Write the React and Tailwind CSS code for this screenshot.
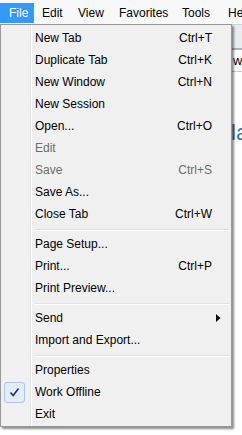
const font = { fontFamily: '"Liberation Sans", Arial, sans-serif' };

const topMenus = [
  { label: 'File', w: 'w-[34px] pl-[9px]', active: true },
  { label: 'Edit', w: 'w-[36px] pl-[8px]' },
  { label: 'View', w: 'w-[41px] pl-[8px]' },
  { label: 'Favorites', w: 'w-[63px] pl-[8px]' },
  { label: 'Tools', w: 'w-[46px] pl-[8px]' },
  { label: 'Help', w: 'w-[40px] pl-[8px]' },
];

const groups = [
  [
    { label: 'New Tab', key: 'Ctrl+T' },
    { label: 'Duplicate Tab', key: 'Ctrl+K' },
    { label: 'New Window', key: 'Ctrl+N' },
    { label: 'New Session' },
    { label: 'Open...', key: 'Ctrl+O' },
    { label: 'Edit', disabled: true },
    { label: 'Save', key: 'Ctrl+S', disabled: true },
    { label: 'Save As...' },
    { label: 'Close Tab', key: 'Ctrl+W' },
  ],
  [
    { label: 'Page Setup...' },
    { label: 'Print...', key: 'Ctrl+P' },
    { label: 'Print Preview...' },
  ],
  [
    { label: 'Send', submenu: true },
    { label: 'Import and Export...' },
  ],
  [
    { label: 'Properties' },
    { label: 'Work Offline', checked: true },
    { label: 'Exit' },
  ],
];

function Row({ height, children, gutter }) {
  return (
    <div className={`flex ${height}`}>
      <div className="w-[29px] shrink-0 flex items-center pl-[3px]">{gutter}</div>
      <div className="flex-1 flex items-center border-l border-[#e2e3e3] shadow-[inset_1px_0_0_#ffffff] pl-[4px]">
        {children}
      </div>
    </div>
  );
}

function CheckBox() {
  return (
    <div className="w-[21px] h-[21px] rounded-[3px] border border-[#a8c6ee] bg-[#e3ecf9] flex items-center justify-center">
      <svg width="11" height="11" viewBox="0 0 11 11">
        <path d="M1.5 5.5 L4.2 8.6 L9.5 1.5" fill="none" stroke="#1c2b7a" strokeWidth="1.6" />
      </svg>
    </div>
  );
}

function Item({ item }) {
  return (
    <Row height="h-[22px]" gutter={item.checked ? <CheckBox /> : null}>
      <div
        className={`flex-1 flex items-center justify-between pr-[19px] text-[12px] ${
          item.disabled ? 'text-[#6d6d6d]' : 'text-black'
        }`}
      >
        <span>{item.label}</span>
        {item.key && <span>{item.key}</span>}
        {item.submenu && (
          <svg width="5" height="8" viewBox="0 0 5 8" className="mr-[-9px]">
            <path d="M0 0 L4.5 4 L0 8 Z" fill="#000" />
          </svg>
        )}
      </div>
    </Row>
  );
}

function Separator() {
  return (
    <Row height="h-[8px]">
      <div className="flex-1 mr-[1px] mt-[1px] border-t border-[#e0e0e0] border-b border-b-white" />
    </Row>
  );
}

export default function App() {
  return (
    <div className="relative w-[242px] h-[435px] overflow-hidden bg-white" style={font}>
      {/* Menu bar */}
      <div className="flex h-[24px] pt-[3px] pb-[1px] bg-[#f7f8f9] text-[12px] text-black whitespace-nowrap">
        {topMenus.map((m) => (
          <div
            key={m.label}
            className={`${m.w} shrink-0 flex items-center ${m.active ? 'bg-[#3399ff] text-white' : ''}`}
          >
            {m.label}
          </div>
        ))}
      </div>

      {/* Page behind the menu */}
      <div className="h-[24px] bg-[#e9ecef] border-t border-[#cfd3d8]" />
      <div className="h-[24px] border-t-2 border-[#a9b0b8] border-b border-b-[#c8cdd3] bg-white text-[13px] text-black pl-[233px] flex items-center">
        w
      </div>
      <div className="pt-[44px] pl-[231px] text-[22px] text-[#3a6bc4] whitespace-nowrap">la</div>

      {/* File dropdown */}
      <div className="absolute left-0 top-[24px] w-[232px] border border-[#979797] bg-[#f0f0f0] shadow-[2px_2px_2px_rgba(0,0,0,0.45)]">
        <Row height="h-[2px]" />
        {groups.map((g, gi) => (
          <div key={gi}>
            {gi > 0 && <Separator />}
            {g.map((item) => (
              <Item key={item.label} item={item} />
            ))}
          </div>
        ))}
        <Row height="h-[1px]" />
      </div>
    </div>
  );
}
